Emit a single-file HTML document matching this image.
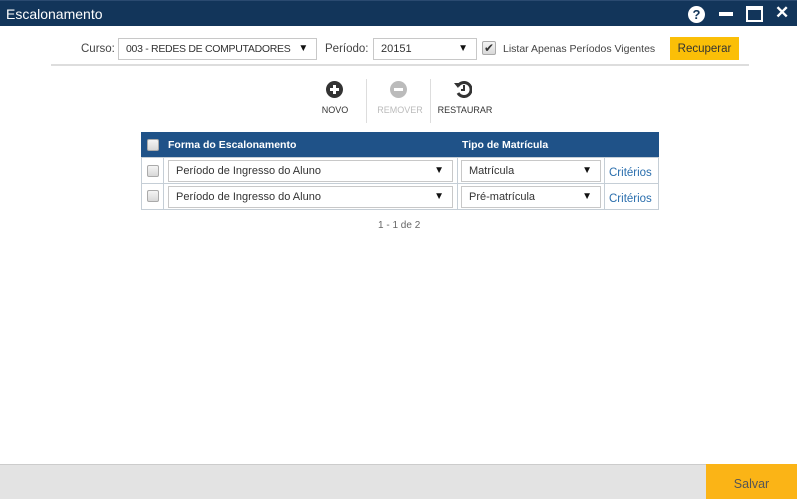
<!DOCTYPE html>
<html><head><meta charset="utf-8"><style>
*{box-sizing:border-box;margin:0;padding:0}
body{width:797px;height:499px;position:relative;background:#fff;font-family:"Liberation Sans",sans-serif;font-size:12px;color:#333;overflow:hidden}
.a{position:absolute}
.title{left:0;top:0;width:797px;height:26px;background:#12355a;border-top:1px solid #2a4a70}
.title span{position:absolute;left:6px;top:5px;color:#fff;font-size:14px}
.sel{border:1px solid #c8c8c8;background:#fff;height:22px;padding:4px 0 0 7px;font-size:11px;white-space:nowrap;overflow:hidden}
.sel i{position:absolute;right:8px;top:4px;font-style:normal;font-size:10px;color:#111}
.cb{width:12px;height:12px;border:1px solid #aaa;border-radius:2px;background:linear-gradient(#f4f4f4,#d8d8d8)}
.tb{font-size:9px;text-align:center;width:70px}
.row{position:absolute;left:141px;width:518px;height:27px;border:1px solid #c5ced6}
.row>div{position:absolute;top:0;height:25px}
</style></head><body>
<div class="a title"><span>Escalonamento</span>
<div class="a" style="left:688px;top:5px;width:17px;height:17px;border-radius:50%;background:#fff;color:#12355a;font-weight:bold;font-size:13px;text-align:center;line-height:17px">?</div>
<div class="a" style="left:719px;top:11px;width:14px;height:4px;background:#fff"></div>
<div class="a" style="left:746px;top:5px;width:17px;height:16px;border:2px solid #fff;border-top-width:4px"></div>
<div class="a" style="left:775px;top:2px;color:#fff;font-size:17px;font-weight:bold">✕</div>
</div>
<div class="a" style="left:81px;top:42px;font-size:11.5px;color:#444;line-height:14px">Curso:</div>
<div class="a sel" style="left:118px;top:38px;width:199px;letter-spacing:-0.3px;font-size:10.5px">003 - REDES DE COMPUTADORES<i>▼</i></div>
<div class="a" style="left:325px;top:42px;color:#444;font-size:11.5px;line-height:14px">Período:</div>
<div class="a sel" style="left:373px;top:38px;width:104px">20151<i>▼</i></div>
<div class="a cb" style="left:482px;top:41px;width:14px;height:14px;color:#333;font-size:12px;line-height:12px;text-align:center">✔</div>
<div class="a" style="left:503px;top:42px;font-size:10.5px;color:#444;line-height:14px">Listar Apenas Períodos Vigentes</div>
<div class="a" style="left:670px;top:37px;width:69px;height:23px;background:#fbbf07;text-align:center;line-height:25px;font-size:11.5px;color:#333">Recuperar</div>
<div class="a" style="left:51px;top:64px;width:698px;height:2px;background:#ddd"></div>
<svg class="a" style="left:326px;top:81px" width="17" height="17"><circle cx="8.5" cy="8.5" r="8.5" fill="#333"/><path d="M8.5 4v9M4 8.5h9" stroke="#fff" stroke-width="3"/></svg>
<div class="a tb" style="left:300px;top:105px">NOVO</div>
<div class="a" style="left:366px;top:79px;width:1px;height:44px;background:#ddd"></div>
<svg class="a" style="left:390px;top:81px" width="17" height="17"><circle cx="8.5" cy="8.5" r="8.5" fill="#bbb"/><path d="M4 8.5h9" stroke="#fff" stroke-width="3"/></svg>
<div class="a tb" style="left:365px;top:105px;color:#bbb">REMOVER</div>
<div class="a" style="left:430px;top:79px;width:1px;height:44px;background:#ddd"></div>
<svg class="a" style="left:454px;top:80px" width="18" height="18"><path d="M4 6A7 7 0 1 1 4 13" fill="none" stroke="#333" stroke-width="3"/><path d="M0 3l7 0-3 5z" fill="#333"/><path d="M10 5v5h-3" fill="none" stroke="#333" stroke-width="2"/></svg>
<div class="a tb" style="left:430px;top:105px">RESTAURAR</div>

<div class="a" style="left:141px;top:132px;width:518px;height:26px;background:#1f5288;color:#fff;font-weight:bold;font-size:10.5px">
<div class="a cb" style="left:6px;top:7px"></div>
<div class="a" style="left:27px;top:7px">Forma do Escalonamento</div>
<div class="a" style="left:321px;top:7px">Tipo de Matrícula</div>
</div>
<div class="row" style="top:157px">
<div style="left:21px;width:1px;background:#c5ced6"></div>
<div style="left:315px;width:1px;background:#c5ced6"></div>
<div style="left:462px;width:1px;background:#c5ced6"></div>
<div class="cb" style="left:5px;top:7px;height:12px"></div>
<div class="sel" style="left:26px;top:2px;width:285px;height:22px">Período de Ingresso do Aluno<i>▼</i></div>
<div class="sel" style="left:319px;top:2px;width:140px;height:22px">Matrícula<i>▼</i></div>
<div style="left:467px;top:8px;color:#2a6ead;font-size:11.5px;line-height:14px;height:14px">Critérios</div>
</div>
<div class="row" style="top:183px">
<div style="left:21px;width:1px;background:#c5ced6"></div>
<div style="left:315px;width:1px;background:#c5ced6"></div>
<div style="left:462px;width:1px;background:#c5ced6"></div>
<div class="cb" style="left:5px;top:6px;height:12px"></div>
<div class="sel" style="left:26px;top:2px;width:285px;height:22px">Período de Ingresso do Aluno<i>▼</i></div>
<div class="sel" style="left:319px;top:2px;width:140px;height:22px">Pré-matrícula<i>▼</i></div>
<div style="left:467px;top:8px;color:#2a6ead;font-size:11.5px;line-height:14px;height:14px">Critérios</div>
</div>
<div class="a" style="left:378px;top:220px;font-size:10px;color:#666">1 - 1 de 2</div>
<div class="a" style="left:0;top:464px;width:797px;height:35px;background:#e3e3e3;border-top:1px solid #ccc"></div>
<div class="a" style="left:706px;top:464px;width:91px;height:35px;background:#fbb416;text-align:center;line-height:40px;font-size:12.5px;color:#555">Salvar</div>
</body></html>
